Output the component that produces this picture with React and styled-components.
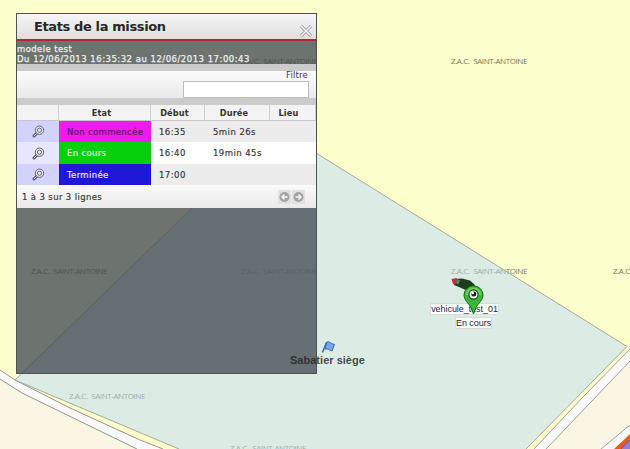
import React from 'react';
import styled, { createGlobalStyle } from 'styled-components';

const GlobalStyle = createGlobalStyle`
  * { box-sizing: border-box; }
  body { margin: 0; overflow: hidden; font-family: "DejaVu Sans", Verdana, sans-serif; }
`;

const MapView = styled.main`
  position: relative;
  width: 630px;
  height: 449px;
  overflow: hidden;
  background: #fcfecb;
`;

const MapDrawing = styled.svg`
  display: block;
  width: 630px;
  height: 449px;
`;

const ZoneLabel = styled.span`
  position: absolute;
  left: ${(p) => p.$x}px;
  top: ${(p) => p.$y}px;
  font: 8px/10px "Open Sans", sans-serif;
  letter-spacing: -0.41px;
  word-spacing: 2px;
  white-space: nowrap;
  color: ${(p) => (p.$dark ? '#75765f' : '#9daeaa')};
`;

const DarkText = styled.span`
  color: #75807a;
`;

const Marker = styled.div`
  position: absolute;
  left: ${(p) => p.$x}px;
  top: ${(p) => p.$y}px;
`;

const MarkerIcon = styled.svg`
  display: block;
`;

const PlaceName = styled.span`
  position: absolute;
  left: 290px;
  top: 353px;
  font: bold 11px/14px "Liberation Sans", Arial, sans-serif;
  letter-spacing: 0.02px;
  white-space: nowrap;
  color: rgba(35, 38, 40, 0.84);
`;

const VehicleTag = styled.span`
  position: absolute;
  left: ${(p) => p.$x}px;
  top: ${(p) => p.$y}px;
  width: ${(p) => p.$w}px;
  height: 12px;
  border: 1px solid #d9dcda;
  background: #fff;
  font: 9px/11px "Liberation Sans", Arial, sans-serif;
  letter-spacing: -0.05px;
  text-align: center;
  white-space: nowrap;
  color: #24243a;
`;

const Panel = styled.section`
  position: absolute;
  left: 16px;
  top: 13px;
  width: 301px;
  height: 361px;
  display: flex;
  flex-direction: column;
  border: 1px solid #4d5350;
  background: rgba(65, 73, 82, 0.77);
`;

const TitleBar = styled.header`
  display: flex;
  justify-content: space-between;
  height: 27px;
  padding: 5px 3px 0 17px;
  border-bottom: 2px solid #b3262d;
  background: linear-gradient(#f5f5f5, #dfdfdf);
`;

const Title = styled.h1`
  margin: 0;
  font: bold 13px/16px "DejaVu Sans", Verdana, sans-serif;
  letter-spacing: -0.38px;
  color: #282828;
`;

const CloseButton = styled.button`
  width: 14px;
  height: 14px;
  margin-top: 5px;
  padding: 0;
  border: 0;
  background: none;
`;

const Summary = styled.div`
  height: 23px;
  padding-top: 4px;
  font-size: 8.5px;
  line-height: 9.5px;
  -webkit-text-stroke: 0.25px #eee;
  white-space: nowrap;
  color: #f0f0f0;
`;

const SummaryLine = styled.div`
  letter-spacing: ${(p) => p.$spacing}px;
`;

const FilterBar = styled.div`
  display: flex;
  flex-direction: column;
  align-items: flex-end;
  height: 41px;
  padding-right: 7px;
  border-top: 7px solid #cbcbcb;
  border-bottom: 7px solid #cbcbcb;
  background: linear-gradient(#fcfcfc, #e9e9e9);
`;

const FilterLabel = styled.label`
  height: 10px;
  padding-right: 1px;
  font-size: 8.5px;
  line-height: 8px;
  letter-spacing: 0.2px;
  color: #4a344a;
`;

const FilterInput = styled.input`
  flex: none;
  width: 126px;
  height: 17px;
  border: 1px solid #bdbdbd;
  background: #fff;
`;

const Row = styled.div`
  display: grid;
  grid-template-columns: 42px 92px 54px 65px 1fr;
  height: ${(p) => p.$h}px;
  background: ${(p) => p.$bg};
  font-size: 8.5px;
  letter-spacing: 0.45px;
  color: #333;
`;

const HeadCell = styled.div`
  display: flex;
  align-items: center;
  justify-content: center;
  padding-right: ${(p) => p.$shift || 0}px;
  border-right: 1px solid #cfcfcf;
  border-bottom: 1px solid #c8c8c8;
  background: #f3f3f3;
  font-size: 8.2px;
  font-weight: bold;
  letter-spacing: 0.15px;
`;

const IconCell = styled.div`
  display: flex;
  align-items: center;
  justify-content: center;
  background: ${(p) => p.$bg};
`;

const StateCell = styled.div`
  display: flex;
  align-items: center;
  padding-left: 8px;
  background: ${(p) => p.$bg};
  color: ${(p) => p.$fg};
  letter-spacing: 0.34px;
  -webkit-text-stroke: 0.15px currentColor;
  white-space: nowrap;
`;

const Cell = styled.div`
  display: flex;
  align-items: center;
  padding-left: 8px;
  white-space: nowrap;
  -webkit-text-stroke: 0.15px currentColor;
`;

const Footer = styled.footer`
  display: flex;
  align-items: center;
  justify-content: space-between;
  height: 23px;
  padding: 0 11px 0 5px;
  background: linear-gradient(#fafafa, #eaeaea);
  font-size: 8.5px;
  letter-spacing: 0.37px;
  -webkit-text-stroke: 0.15px currentColor;
  color: #333;
`;

const Pager = styled.div`
  display: flex;
  gap: 1px;
`;

const PageButton = styled.button`
  display: block;
  width: 13px;
  height: 14px;
  padding: 0;
  border: 0;
  background: #e1e1e1;
`;

const Magnifier = () => (
  <svg width="13" height="13" viewBox="0 0 13 13" fill="none">
    <path d="M5 8 2 11" stroke="#555764" strokeWidth="3" strokeLinecap="round" />
    <path d="M5 8 2 11" stroke="#d8d8e4" strokeWidth="1" strokeLinecap="round" />
    <circle cx="7.5" cy="5.2" r="4.2" fill="#e3e3ec" stroke="#666874" />
    <circle cx="7.5" cy="5.2" r="2.1" stroke="#686a76" />
  </svg>
);

const Arrow = ({ left }) => (
  <svg width="13" height="14" viewBox="0 0 13 14" fill="none">
    <circle cx="6.5" cy="7" r="5" fill="#a3a3a3" />
    <path
      d={left ? 'M9.5 7H4M6.5 4.5 4 7l2.5 2.5' : 'M3.5 7H9M6.5 4.5 9 7 6.5 9.5'}
      stroke="#f6f6f6"
      strokeWidth="1.5"
    />
  </svg>
);

const zones = [
  [241, 56, true],
  [451, 56, true],
  [31, 266, true],
  [241, 266, false],
  [613, 266, true],
  [69, 391, false],
  [230, 443, false],
];

const missions = [
  { state: 'Non commencée', bg: '#ee1bea', fg: '#62125f', start: '16:35', length: '5min 26s' },
  { state: 'En cours', bg: '#05d00a', fg: '#eefbe9', start: '16:40', length: '19min 45s' },
  { state: 'Terminée', bg: '#2117d6', fg: '#efeaff', start: '17:00', length: '' },
];

export default function App() {
  return (
    <>
      <GlobalStyle />
      <MapView>
        <MapDrawing viewBox="0 0 630 449">
          <path d="M0 379 23 393 137 449H0Z" fill="#fbf5e4" />
          <path d="M0 370 15 380 70 408 140 440 163 449H137L22 393 0 379Z" fill="#fafafc" />
          <path d="M0 370 15 380 70 408 140 440 163 449M0 379 22 393 137 449" fill="none" stroke="#95958f" />
          <path d="M275 127.5 627 346.5 526 449H179L15 380Z" fill="#dcece5" />
          <path d="M275 127.5 627 346.5 526 449M179 449 15 380 275 127.5" fill="none" stroke="#a5aa98" />
          <path d="M630 349 583 397 533 449H630Z" fill="#fafafc" />
          <path d="M630 361 590 403 546 449H630Z" fill="#fbf5e4" />
          <path d="M630 349 583 397 534 449M630 361 590 403 546 449" fill="none" stroke="#a0a09a" />
          <path d="M630 425 601 449H630Z" fill="#fafafc" />
          <path d="M630 425 601 449" stroke="#a0a09a" />
          <path d="M630 434 614 449H630Z" fill="#f05a18" />
          <path d="M630 439.5 621 449H630Z" fill="#8b80dc" />
          <path d="M630 439.5 621 449" stroke="#6258a8" />
        </MapDrawing>
        {zones.map(([x, y, dark]) => (
          <ZoneLabel key={`${x}-${y}`} $x={x} $y={y} $dark={dark}>Z.A.C. SAINT-ANTOINE</ZoneLabel>
        ))}
        <ZoneLabel $x={451} $y={266}>Z.A.C. SAINT-AN<DarkText>TOINE</DarkText></ZoneLabel>

        <Panel>
          <TitleBar>
            <Title>Etats de la mission</Title>
            <CloseButton aria-label="Fermer">
              <svg width="14" height="14" viewBox="0 0 14 14" fill="none">
                <path d="M2 2 12 12M12 2 2 12" stroke="#858585" strokeWidth="3" />
                <path d="M2 2 12 12M12 2 2 12" stroke="#fafafa" strokeWidth="1.7" />
              </svg>
            </CloseButton>
          </TitleBar>
          <Summary>
            <SummaryLine $spacing={0.4}>modele test</SummaryLine>
            <SummaryLine $spacing={0.5}>Du 12/06/2013 16:35:32 au 12/06/2013 17:00:43</SummaryLine>
          </Summary>
          <FilterBar>
            <FilterLabel htmlFor="filter">Filtre</FilterLabel>
            <FilterInput id="filter" />
          </FilterBar>
          <Row $h={16} $bg="#f3f3f3">
            <HeadCell />
            <HeadCell $shift={6}>Etat</HeadCell>
            <HeadCell $shift={6}>Début</HeadCell>
            <HeadCell $shift={6}>Durée</HeadCell>
            <HeadCell $shift={8}>Lieu</HeadCell>
          </Row>
          {missions.map((m, i) => (
            <Row key={m.state} $h={i === 1 ? 22 : 21} $bg={i === 1 ? '#fff' : '#ececec'}>
              <IconCell $bg={i === 1 ? '#e6e6ff' : '#d2d2ff'}><Magnifier /></IconCell>
              <StateCell $bg={m.bg} $fg={m.fg}>{m.state}</StateCell>
              <Cell>{m.start}</Cell>
              <Cell>{m.length}</Cell>
              <Cell />
            </Row>
          ))}
          <Footer>
            <span>1 à 3 sur 3 lignes</span>
            <Pager>
              <PageButton aria-label="Page précédente"><Arrow left /></PageButton>
              <PageButton aria-label="Page suivante"><Arrow /></PageButton>
            </Pager>
          </Footer>
        </Panel>

        <Marker $x={320} $y={340}>
          <MarkerIcon width="16" height="15" viewBox="0 0 16 15">
            <path d="M6.5 2.5C9 .5 10 3.5 14.5 4.5L12 11C9.5 10.5 8 8 5 9Z" fill="#78a5f2" stroke="#3765b5" />
            <path d="M6.8 2 2.5 12.5" stroke="#2869b8" strokeWidth="1.5" />
          </MarkerIcon>
        </Marker>
        <PlaceName>Sabatier siège</PlaceName>
        <VehicleTag $x={430} $y={303} $w={69}>vehicule_test_01</VehicleTag>
        <VehicleTag $x={455} $y={317} $w={37}>En cours</VehicleTag>
        <Marker $x={450} $y={276}>
          <MarkerIcon width="36" height="39" viewBox="0 0 36 39">
            <path d="M4 3 12 2.5 20 4.5 25 9 25 15 17 14.5 10 11.5 4 9Z" fill="#1d3d1b" />
            <path d="M1.5 3 7 2 5.500 8.5 3 8Z" fill="#d52c37" />
            <path d="M7 3 10 4.5 8 8.5 6 7Z" fill="#6e8277" />
            <path
              d="M23.5 38 21 31.5C18.5 27 14 24 14 19a9.5 9.2 0 0 1 19 0C33 24 28.500 27 26 31.5Z"
              fill="#39b736"
              stroke="#126c17"
            />
            <path d="M15.5 19a8 7.5 0 0 1 16 0" fill="#6ed35a" />
            <circle cx="23.5" cy="18.5" r="4.6" fill="#f7fff5" stroke="#164b18" strokeWidth="1.2" />
            <circle cx="23.8" cy="18" r="2.5" fill="#172d1c" />
            <circle cx="22.8" cy="17" r="1.2" fill="#fff" />
          </MarkerIcon>
        </Marker>
      </MapView>
    </>
  );
}
